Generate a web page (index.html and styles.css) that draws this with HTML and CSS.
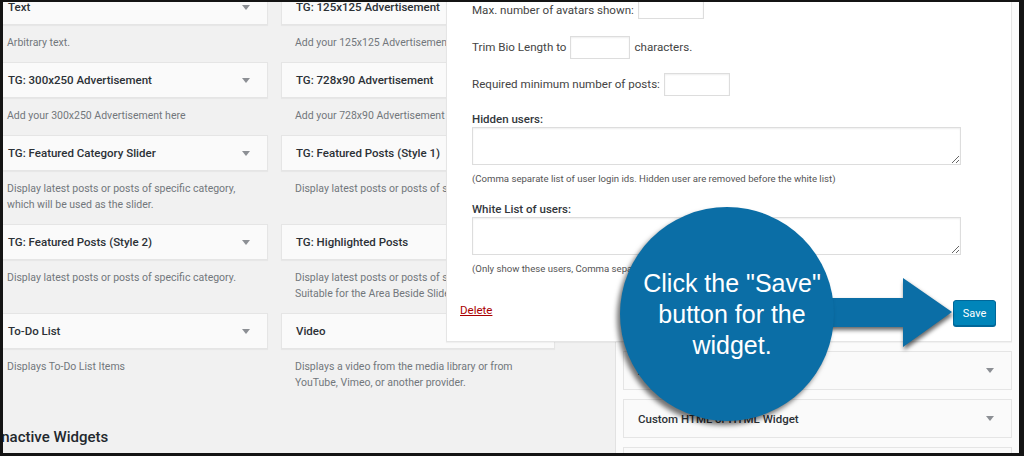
FILE: index.html
```html
<!DOCTYPE html>
<html lang="en">
<head>
  <meta charset="UTF-8">
  <meta name="viewport" content="width=device-width, initial-scale=1.0">
  <title>Widgets</title>
  <link rel="stylesheet" href="styles.css">
</head>
<body>
  <div class="frame">
    <div class="screen">

      <!-- Available widgets -->
      <div class="available">
        <div class="widget-grid">
          <div class="widget">
            <div class="widget-top"><span>Text</span><i class="caret"></i></div>
            <div class="widget-desc">Arbitrary text.</div>
          </div>
          <div class="widget">
            <div class="widget-top"><span>TG: 125x125 Advertisement</span><i class="caret"></i></div>
            <div class="widget-desc">Add your 125x125 Advertisement here</div>
          </div>

          <div class="widget">
            <div class="widget-top"><span>TG: 300x250 Advertisement</span><i class="caret"></i></div>
            <div class="widget-desc">Add your 300x250 Advertisement here</div>
          </div>
          <div class="widget">
            <div class="widget-top"><span>TG: 728x90 Advertisement</span><i class="caret"></i></div>
            <div class="widget-desc">Add your 728x90 Advertisement here</div>
          </div>

          <div class="widget">
            <div class="widget-top"><span>TG: Featured Category Slider</span><i class="caret"></i></div>
            <div class="widget-desc">Display latest posts or posts of specific category, which will be used as the slider.</div>
          </div>
          <div class="widget">
            <div class="widget-top"><span>TG: Featured Posts (Style 1)</span><i class="caret"></i></div>
            <div class="widget-desc">Display latest posts or posts of specific category.</div>
          </div>

          <div class="widget">
            <div class="widget-top"><span>TG: Featured Posts (Style 2)</span><i class="caret"></i></div>
            <div class="widget-desc">Display latest posts or posts of specific category.</div>
          </div>
          <div class="widget">
            <div class="widget-top"><span>TG: Highlighted Posts</span><i class="caret"></i></div>
            <div class="widget-desc">Display latest posts or posts of specific category. Suitable for the Area Beside Slider.</div>
          </div>

          <div class="widget">
            <div class="widget-top"><span>To-Do List</span><i class="caret"></i></div>
            <div class="widget-desc">Displays To-Do List Items</div>
          </div>
          <div class="widget">
            <div class="widget-top"><span>Video</span><i class="caret"></i></div>
            <div class="widget-desc">Displays a video from the media library or from YouTube, Vimeo, or another provider.</div>
          </div>
        </div>

        <h3 class="inactive-title">Inactive Widgets</h3>
      </div>

      <!-- Sidebar -->
      <div class="sidebar">
        <div class="widget-open">
          <div class="field-row">
            <span>Max. number of avatars shown:</span>
            <input type="text" class="num">
          </div>
          <div class="field-row">
            <span>Trim Bio Length to</span>
            <input type="text" class="num short">
            <span>characters.</span>
          </div>
          <div class="field-row">
            <span>Required minimum number of posts:</span>
            <input type="text" class="num">
          </div>

          <div class="area-label">Hidden users:</div>
          <textarea class="users"></textarea>
          <div class="note">(Comma separate list of user login ids. Hidden user are removed before the white list)</div>

          <div class="area-label second">White List of users:</div>
          <textarea class="users"></textarea>
          <div class="note">(Only show these users, Comma separated list of user login ids)</div>

          <div class="widget-actions">
            <a class="delete">Delete</a>
            <button class="save">Save</button>
          </div>
        </div>

        <div class="side-widget"><span>Author Avatars</span><i class="caret"></i></div>
        <div class="side-widget"><span>Custom HTML or HTML Widget</span><i class="caret"></i></div>
        <div class="side-widget"><span>Search</span><i class="caret"></i></div>
      </div>
    </div>

    <!-- Callout -->
    <svg class="arrow" width="160" height="90" viewBox="0 0 160 90">
      <polygon points="0,28 103,28 103,8 152,42 103,77 103,57 0,57" fill="#0b6ea6"/>
    </svg>
    <div class="callout">Click the "Save"<br>button for the<br>widget.</div>
  </div>
</body>
</html>
```

FILE: styles.css
```css
* {
  box-sizing: border-box;
}

body {
  margin: 0;
  font-family: Roboto, "Liberation Sans", sans-serif;
  color: #23282d;
}

/* dark frame round the screenshot */
.frame {
  position: relative;
  width: 1024px;
  height: 456px;
  border-style: solid;
  border-color: #141414;
  border-width: 2px 5px 3px 3px;
  background: #f1f1f1;
}

.screen {
  display: flex;
  height: 100%;
  overflow: hidden;
}

/* left side: list of available widgets */
.available {
  flex: 0 0 622px;
  margin: -13px 0 0 -10px;
}

.widget-grid {
  display: grid;
  grid-template-columns: 275px 274px;
  column-gap: 13px;
  align-items: start;
}

.widget-top {
  display: flex;
  align-items: center;
  height: 36px;
  padding: 0 17px 0 14px;
  background: #fafafa;
  border: 1px solid #e5e5e5;
  box-shadow: 0 1px 1px rgba(0, 0, 0, 0.04);
  font-size: 11.5px;
  font-weight: 500;
  color: #2c3136;
}

.caret {
  margin-left: auto;
  border-left: 4px solid transparent;
  border-right: 4px solid transparent;
  border-top: 5px solid #8c8f94;
}

.widget-desc {
  padding: 10px 14px 11px;
  font-size: 10.5px;
  line-height: 16px;
  color: #72777c;
}

.inactive-title {
  margin: 25px 0 0 4px;
  font-size: 15px;
  font-weight: 500;
  line-height: 20px;
}

/* right side: the sidebar with the open widget */
.sidebar {
  flex: 1;
  background: #fbfbfb;
  border-left: 1px solid #e2e2e2;
}

.widget-open {
  position: relative;
  z-index: 1;
  margin: -22px 7px 0 -170px;
  padding: 17px 15px 15px 25px;
  background: #fff;
  border: 1px solid #e5e5e5;
  box-shadow: 0 1px 1px rgba(0, 0, 0, 0.04);
  font-size: 11.6px;
  color: #444;
}

.field-row {
  display: flex;
  align-items: center;
  gap: 4px;
  height: 24px;
  margin-bottom: 13px;
}

.field-row:nth-child(3) {
  margin-bottom: 15px;
}

.num {
  width: 66px;
  height: 23px;
  margin: 0;
  border: 1px solid #ddd;
  background: #fff;
  box-shadow: inset 0 1px 2px rgba(0, 0, 0, 0.07);
}

.field-row:first-child .num {
  height: 20px;
  margin-bottom: 3px;
}

.num.short {
  width: 60px;
}

.area-label {
  font-size: 11.5px;
  font-weight: 500;
  line-height: 16px;
  color: #32373c;
}

.area-label.second {
  margin-top: 16px;
}

.users {
  display: block;
  width: 489px;
  height: 38px;
  margin: 0;
  border: 1px solid #ddd;
  box-shadow: inset 0 1px 2px rgba(0, 0, 0, 0.07);
}

.note {
  margin-top: 8px;
  font-size: 9.6px;
  line-height: 12px;
  color: #555;
}

.widget-actions {
  display: flex;
  align-items: center;
  justify-content: space-between;
  margin: 25px 0 0 -12px;
}

.delete {
  margin-bottom: 6px;
  color: #a00;
  text-decoration: underline;
  font-size: 11.5px;
}

.save {
  width: 43px;
  height: 26px;
  padding: 0;
  background: #0085ba;
  border: 1px solid #006799;
  border-radius: 3px;
  box-shadow: 0 1px 0 #006799;
  color: #fff;
  font-family: Roboto, "Liberation Sans", sans-serif;
  font-size: 11px;
}

.side-widget {
  display: flex;
  align-items: center;
  height: 39px;
  margin: 9px 7px 0 7px;
  padding: 0 17px 0 14px;
  background: #fafafa;
  border: 1px solid #e5e5e5;
  font-size: 11.5px;
  font-weight: 500;
  color: #2c3136;
}

/* blue callout bubble and arrow */
.callout {
  position: absolute;
  z-index: 3;
  left: 617px;
  top: 205px;
  width: 214px;
  height: 214px;
  display: flex;
  align-items: center;
  justify-content: center;
  padding-left: 10px;
  text-align: center;
  border-radius: 50%;
  background: #0b6ea6;
  box-shadow: -3px 4px 5px rgba(0, 0, 0, 0.55);
  color: #fff;
  font-family: "Liberation Sans", Arial, sans-serif;
  font-size: 25px;
  line-height: 31px;
}

.arrow {
  position: absolute;
  z-index: 2;
  left: 797px;
  top: 268px;
  filter: drop-shadow(1px 3px 2px rgba(0, 0, 0, 0.6));
}
```
